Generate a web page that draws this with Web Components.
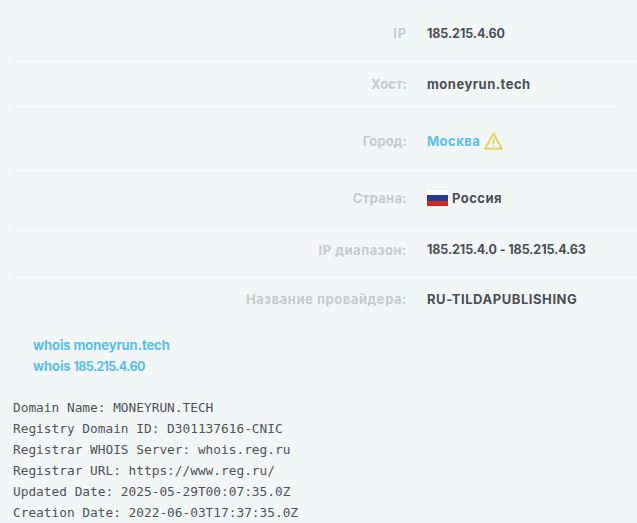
<!DOCTYPE html>
<html lang="ru">
<head>
<meta charset="utf-8">
<title>whois</title>
<style>
  html, body { margin: 0; background: #f3f6f7; }
  body { height: 523px; overflow: hidden; }
  whois-links a { display: block; }
  whois-links .num { font-size: 12.5px; letter-spacing: -0.65px; }
</style>
</head>
<body>
<whois-page>
  <info-table>
    <info-row label="IP" label-spacing="0.9" height="51" value-size="12.5" value-spacing="-0.08">185.215.4.60</info-row>
    <info-row label="Хост:" label-spacing="0.05" height="51" narrow value-spacing="0.5">moneyrun.tech</info-row>
    <info-row label="Город:" label-spacing="0.1" height="64" lift="2" value-spacing="0.5"><city-value>Москва</city-value></info-row>
    <info-row label="Страна:" label-spacing="0.3" height="51" lift="2" value-spacing="0.45"><country-value>Россия</country-value></info-row>
    <info-row label="IP диапазон:" label-spacing="0.53" height="50" value-size="12.5" value-spacing="-0.09">185.215.4.0 - 185.215.4.63</info-row>
    <info-row label="Название провайдера:" label-spacing="0.55" height="49" lift="2" last value-spacing="0.55">RU-TILDAPUBLISHING</info-row>
  </info-table>
  <whois-links>
    <a>whois moneyrun.tech</a>
    <a>whois <span class="num">185.215.4.60</span></a>
  </whois-links>
  <whois-output>Domain Name: MONEYRUN.TECH
Registry Domain ID: D301137616-CNIC
Registrar WHOIS Server: whois.reg.ru
Registrar URL: https://www.reg.ru/
Updated Date: 2025-05-29T00:07:35.0Z
Creation Date: 2022-06-03T17:37:35.0Z</whois-output>
</whois-page>

<script>
// Shared font stack for the headings and values
const SANS = '"Inter", "Open Sans", sans-serif';

class WhoisPage extends HTMLElement {
  constructor() {
    super();
    this.attachShadow({ mode: "open" });
    this.shadowRoot.innerHTML = `
      <style>
        :host { display: block; padding: 8px 0 0 13px; color: #4a4f57; font-family: ${SANS}; }
      </style>
      <slot></slot>
    `;
  }
}

class InfoTable extends HTMLElement {
  constructor() {
    super();
    this.attachShadow({ mode: "open" });
    this.shadowRoot.innerHTML = `
      <style>
        :host { display: flex; flex-direction: column; width: 624px; }
      </style>
      <slot></slot>
    `;
  }
}

class InfoRow extends HTMLElement {
  constructor() {
    super();
    this.attachShadow({ mode: "open" });
    const height = this.getAttribute("height");
    const label = this.getAttribute("label");
    const labelSpacing = this.getAttribute("label-spacing") || "0";
    const spacing = this.getAttribute("value-spacing") || "0";
    const size = this.getAttribute("value-size") || "13";
    const lift = this.getAttribute("lift") || "0";
    this.shadowRoot.innerHTML = `
      <style>
        :host {
          display: grid;
          grid-template-columns: 394px 1fr;
          column-gap: 20px;
          align-items: center;
          box-sizing: border-box;
          height: ${height}px;
          padding-bottom: ${lift}px;
          border-bottom: 1px solid #edf0f2;
          font-size: 13px;
          font-weight: 700;
        }
        :host([narrow]) { width: 604px; }
        :host([last]) { border-bottom: none; }
        .label { text-align: right; color: #c6cacd; letter-spacing: ${labelSpacing}px; }
        .value { display: flex; align-items: center; color: #4a4f57; white-space: nowrap; font-size: ${size}px; letter-spacing: ${spacing}px; }
      </style>
      <div class="label"></div>
      <div class="value"><slot></slot></div>
    `;
    this.shadowRoot.querySelector(".label").textContent = label;
  }
}

class CityValue extends HTMLElement {
  constructor() {
    super();
    this.attachShadow({ mode: "open" });
    this.shadowRoot.innerHTML = `
      <style>
        :host { display: inline-flex; align-items: center; gap: 4px; color: #58bfec; }
        svg { display: block; }
      </style>
      <slot></slot>
      <svg width="19" height="18" viewBox="0 0 19 18" fill="none">
        <path d="M9.5 1.6 L17.9 16.6 H1.1 Z" stroke="#e6cf4a" stroke-width="1.8" stroke-linejoin="round"/>
        <path d="M9.5 6.5 V12" stroke="#e6cf4a" stroke-width="1.5"/>
        <path d="M9.5 13 V14.6" stroke="#e6cf4a" stroke-width="1.5"/>
      </svg>
    `;
  }
}

class CountryValue extends HTMLElement {
  constructor() {
    super();
    this.attachShadow({ mode: "open" });
    this.shadowRoot.innerHTML = `
      <style>
        :host { display: inline-flex; align-items: center; gap: 4px; }
        .flag { display: flex; flex-direction: column; width: 21px; height: 16px; }
        .flag i { flex: 1; }
      </style>
      <span class="flag">
        <i style="background:#fff"></i>
        <i style="background:#1c3f94"></i>
        <i style="background:#d32a1e"></i>
      </span>
      <slot></slot>
    `;
  }
}

class WhoisLinks extends HTMLElement {
  constructor() {
    super();
    this.attachShadow({ mode: "open" });
    this.shadowRoot.innerHTML = `
      <style>
        :host {
          display: flex;
          flex-direction: column;
          align-items: flex-start;
          row-gap: 4px;
          padding: 13px 0 0 20px;
          font-size: 13px;
          font-weight: 700;
          line-height: 17px;
          letter-spacing: -0.08px;
          color: #58bfec;
        }
      </style>
      <slot></slot>
    `;
  }
}

class WhoisOutput extends HTMLElement {
  constructor() {
    super();
    this.attachShadow({ mode: "open" });
    this.shadowRoot.innerHTML = `
      <style>
        :host {
          display: block;
          margin-top: 22px;
          font-family: "DejaVu Sans Mono", monospace;
          font-size: 12.8px;
          line-height: 21px;
          color: #4f5358;
        }
        .text { white-space: pre; }
      </style>
      <div class="text"><slot></slot></div>
    `;
  }
}

customElements.define("whois-page", WhoisPage);
customElements.define("info-table", InfoTable);
customElements.define("info-row", InfoRow);
customElements.define("city-value", CityValue);
customElements.define("country-value", CountryValue);
customElements.define("whois-links", WhoisLinks);
customElements.define("whois-output", WhoisOutput);
</script>
</body>
</html>
